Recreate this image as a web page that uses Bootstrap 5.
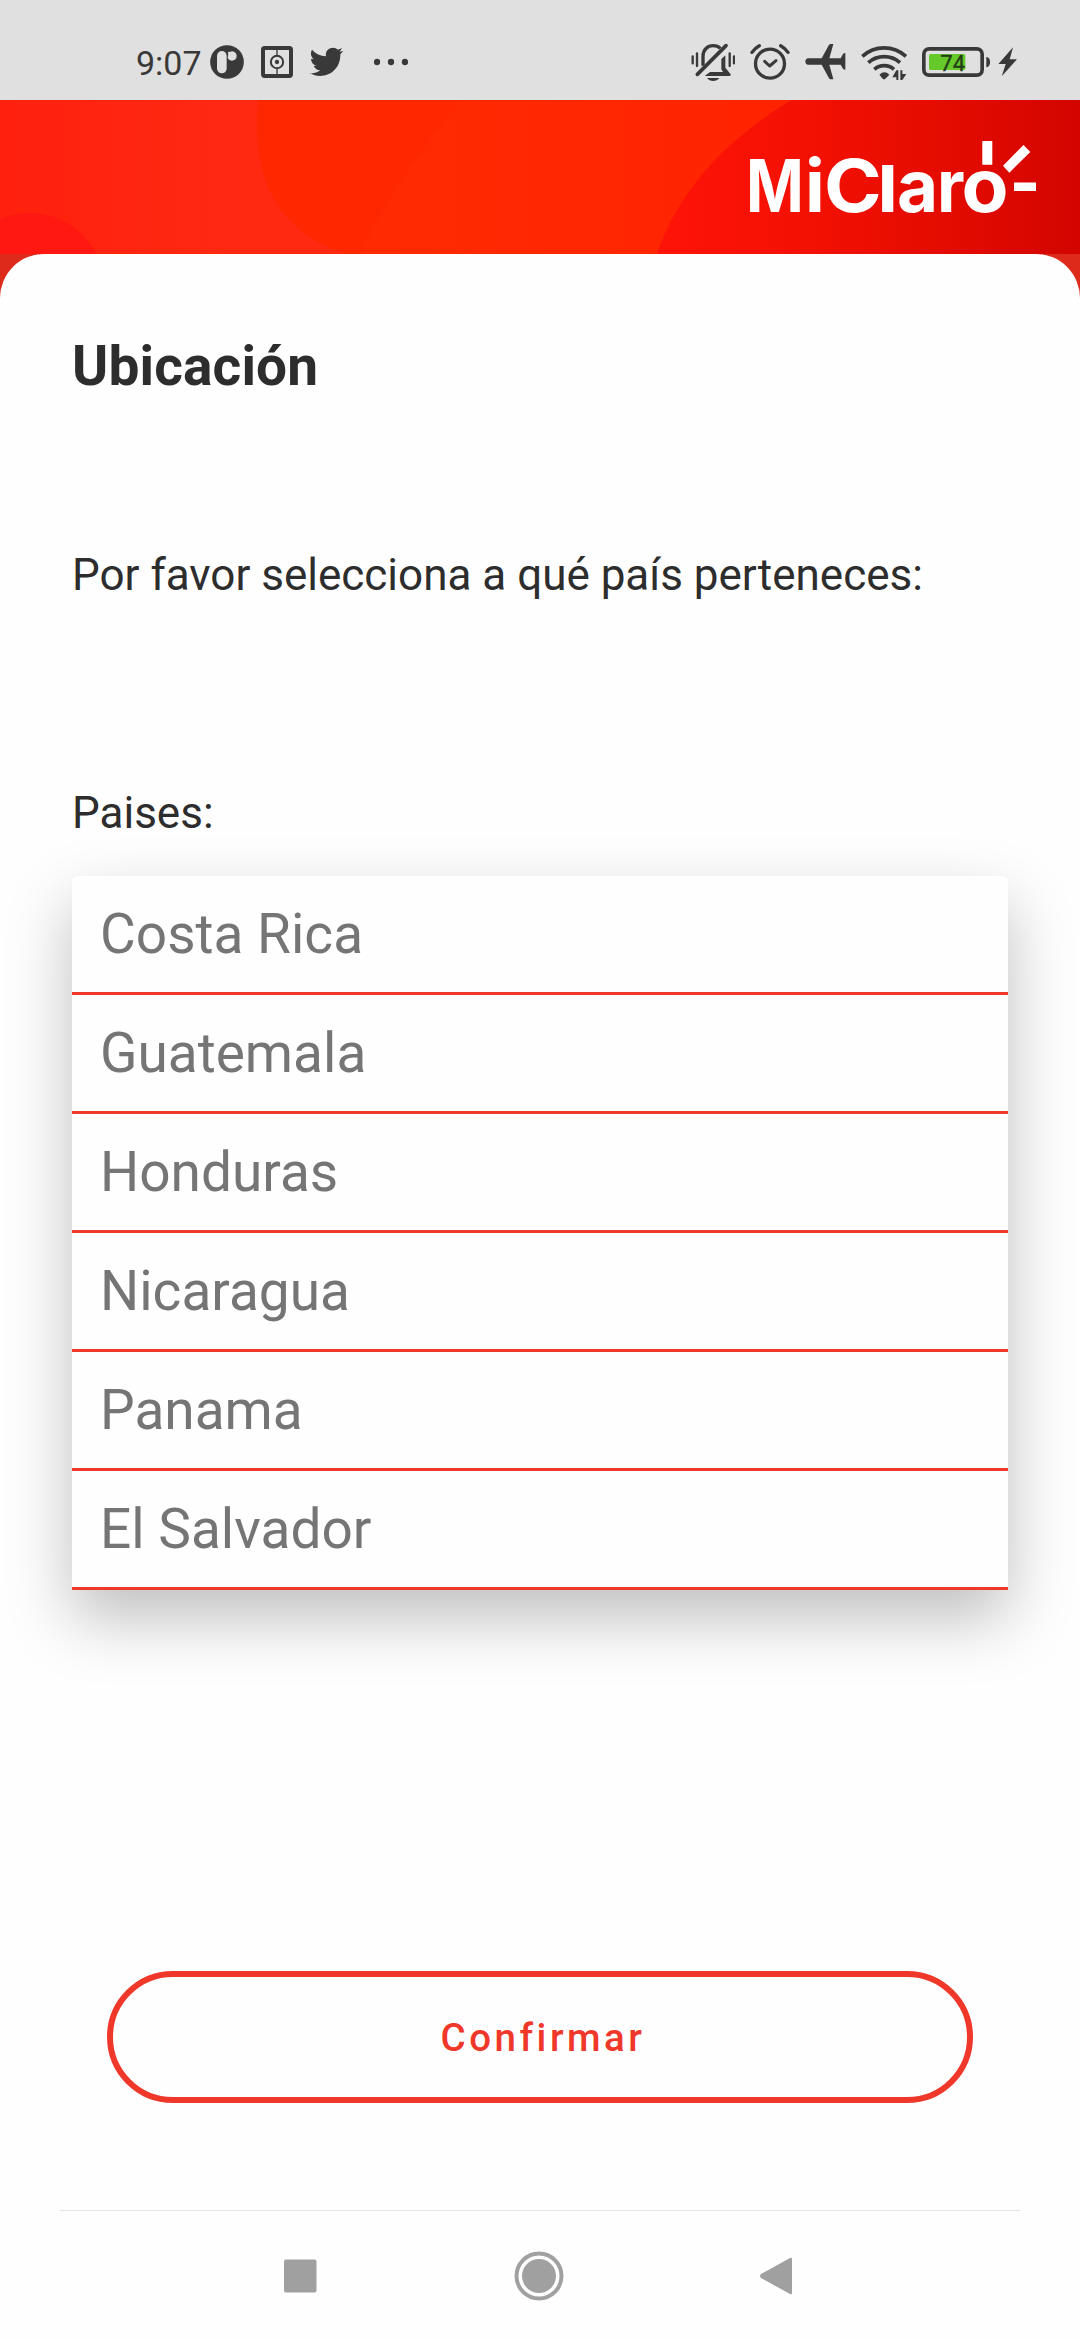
<!DOCTYPE html>
<html lang="es">
<head>
<meta charset="utf-8">
<meta name="viewport" content="width=device-width, initial-scale=1">
<title>Mi Claro</title>
<link href="https://cdn.jsdelivr.net/npm/bootstrap@5.3.0/dist/css/bootstrap.min.css" rel="stylesheet">
<style>
  :root { --claro: #f0382a; --ink: #2d2d2d; --icon: #393939; }
  body { font-family: Roboto, "Liberation Sans", sans-serif; background: #fefefe; color: var(--ink); height: 2340px; overflow: hidden; }
  svg { display: block; flex: none; }
  .status { height: 100px; background: #e0e0e0; padding: 42px 62.6px 0 136px; color: var(--icon); }
  .status svg { height: 40px; }
  .clock { width: 74px; font-size: 34px; line-height: 40px; padding-top: 1px; }
  .bell { margin-left: auto; }
  .sp-8 { margin-left: 8px; }
  .sp-14 { margin-left: 14.3px; }
  .sp-15 { margin-left: 15.3px; }
  .sp-17 { margin-left: 17.2px; }
  .sp-29 { margin-left: 29.4px; }
  .banner { height: 154px; }
  .sheet-wrap { background: #dd2a1b; }
  .sheet { background: #fefefe; border-radius: 44px 44px 0 0; height: 1956px; padding: 80px 72px 0; }
  .title { font-size: 55px; line-height: 64px; font-weight: 700; letter-spacing: .15px; }
  .copy { font-size: 44px; line-height: 52px; }
  .ask { margin-top: 151px; }
  .label { margin-top: 186px; }
  .countries { margin-top: 37px; border-radius: 6px 6px 0 0; box-shadow: 0 28px 64px rgba(0,0,0,.25); background: #fff; }
  .countries .list-group-item { height: 119px; border: 0; border-bottom: 3px solid var(--claro); padding: 26px 28px 0; font-size: 55px; line-height: 64px; color: #757575; background: #fefefe; border-radius: 0; }
  .countries .list-group-item:first-child { border-radius: 6px 6px 0 0; }
  .confirm { margin: 381px 35px 0; height: 132px; border: 6px solid var(--claro); color: var(--claro); font-size: 38.5px; font-weight: 500; letter-spacing: 3.5px; padding: 2px 0 0 6px; }
  .keys { height: 130px; margin: 0 60px; border-top: 1px solid #e4e4e4; padding: 0 227px 0 224px; color: #a0a0a0; }
</style>
</head>
<body class="d-flex flex-column">
<header class="status d-flex align-items-start">
  <span class="clock">9:07</span>
  <svg width="34" viewBox="270 66 102 120"><circle cx="321" cy="126" r="50.5" fill="#393939"/><rect x="291" y="93" width="29" height="67" rx="14.500" fill="#e0e0e0"/><path d="M324 96q2 10-1 17a14 14 0 1 0 8-18z" fill="#e0e0e0"/></svg>
  <svg class="sp-17" width="32" viewBox="423 66 96 120"><g fill="none" stroke="#393939"><rect x="429" y="84" width="84" height="84" rx="5" stroke-width="12"/><circle cx="471" cy="126" r="18.500" stroke-width="6"/><path d="M471 88v19M471 145v20" stroke-width="4"/></g><circle cx="471" cy="126" r="6.500" fill="#393939"/></svg>
  <svg class="sp-17" width="34" viewBox="572 66 102 120"><path fill="#393939" d="M578 89c11 12 25 19 42 20-3-14 7-26 21-26 6 0 11 2 15 6l12-5-7 11 11-2-9 10c1 38-26 65-61 65-11 0-21-3-30-8 12 1 22-2 31-9-10 0-17-6-20-14h9c-11-3-17-11-17-21l9 2c-9-7-12-18-6-29z"/></svg>
  <svg class="sp-29" width="34" viewBox="762 66 102 120" fill="#393939"><circle cx="771" cy="126" r="9.500"/><circle cx="813" cy="126" r="9.500"/><circle cx="855" cy="126" r="9.500"/></svg>

  <svg class="bell" width="44.700" viewBox="62 66 134 120" fill="none" stroke="#393939"><path d="M67 109v21M80 100v38M178 100v38M191 109v21" stroke-width="7" stroke-linecap="round"/><path d="M98 137v-28c0-20 14-32 30-32 10 0 17 3 22 8" stroke-width="10"/><path d="M81 163 167 77" stroke-width="11" stroke-linecap="round"/><path d="M103 168l16-12h39l-5-8v-31l12-11v37l16 20c1 3-1 5-4 5z" fill="#393939" stroke="none"/><path d="M110 174h37c-8 12-29 12-37 0z" fill="#393939" stroke="none"/></svg>
  <svg class="sp-14" width="40" viewBox="238 66 120 120" fill="none" stroke="#393939" stroke-linecap="round"><circle cx="298" cy="131" r="43.500" stroke-width="10"/><path d="M244 97q9-13 22-20M330 77q13 7 22 20" stroke-width="10"/><path d="M282 124l15 14 19-16" stroke-width="9" stroke-linejoin="round"/></svg>
  <svg class="sp-15" width="40.700" viewBox="404 66 122 120"><path fill="#393939" d="M414 115h40l22-41q2-2 5-2h8l-12 43h34l7-13q2-3 7-3v50q-5 0-7-3l-7-12h-34l12 44h-8q-3 0-5-3l-22-41h-40c-12 0-12-19 0-19z"/></svg>
  <svg class="sp-15" width="46.700" viewBox="572 66 140 120" fill="none" stroke="#393939" stroke-width="11"><path d="M576 109c37-34 93-34 131 0M594 128c27-24 68-24 95 0M612 148c17-15 42-15 59 0"/><path d="M627 164q15-14 30 0l-12 12q-4 3-8 0z" fill="#393939" stroke="none"/><g fill="#393939" stroke="none"><path d="M678 151h6v29h-6v-8h-12zM690 151h6v11h12l-12 18h-6z"/></g></svg>
  <svg class="sp-14" width="68" viewBox="756 66 204 120"><rect x="761.500" y="86.500" width="175" height="79" rx="16" fill="none" stroke="#393939" stroke-width="11"/><rect x="777" y="102" width="109" height="48" rx="5" fill="#65c92a"/><path d="M949 111c15 0 15 31 0 31z" fill="#393939"/><text x="811" y="152" font-size="66" font-family="Roboto, sans-serif" fill="#233d18" stroke="#233d18">74</text></svg>
  <svg class="sp-8" width="19.400" viewBox="984 66 58 120"><path fill="#393939" d="M1029 82l-44 50h22l-12 37 46-51h-22z"/></svg>
</header>

<svg class="banner" width="1080" height="154" viewBox="0 100 1080 154" role="img" aria-label="Mi Claro">
  <defs>
    <linearGradient id="base" x1="0" x2="258" y1="0" y2="0" gradientUnits="userSpaceOnUse"><stop stop-color="#ff210d"/><stop offset="1" stop-color="#ff2912"/></linearGradient>
    <linearGradient id="deep" x1="657" x2="1080" y1="0" y2="0" gradientUnits="userSpaceOnUse"><stop stop-color="#ff1308"/><stop offset=".35" stop-color="#f31103"/><stop offset=".7" stop-color="#e30b00"/><stop offset="1" stop-color="#d20500"/></linearGradient>
    <linearGradient id="warm" x1="361" x2="760" y1="0" y2="0" gradientUnits="userSpaceOnUse"><stop stop-color="#ff2a02"/><stop offset="1" stop-color="#ff2400"/></linearGradient>
  </defs>
  <path fill="url(#base)" d="M0 100h1080v154H0z"/>
  <path fill="#ff2700" d="M258 100C252 170 270 229 346 254H760L900 100z"/>
  <path fill="url(#warm)" d="M462 100Q388 190 361 254H760L900 100z"/>
  <circle cx="30" cy="287" r="74" fill="#ff1712"/>
  <path fill="url(#deep)" d="M791 100Q687 164 657 254H1080V100z"/>
  <g font-family="Inter, sans-serif" font-weight="700" font-size="73" fill="#fff">
    <text transform="translate(745.9 212) scale(.85 1)">M</text>
    <text x="805" y="212">i</text>
    <text transform="translate(824 212) scale(1.070 1)">C</text>
    <text x="878.600" y="212" font-size="65" font-weight="800">l</text>
    <text transform="translate(897 212) scale(.97 1)">a</text>
    <text transform="translate(937 212) scale(.93 1)">r</text>
    <text transform="translate(961.500 212) scale(1.050 1.020)">o</text>
    <path d="M982.300 141h10v23.700h-10zM1023.500 145l6.800 7-21 20.700-6.300-7zM1014 182.500h22v8.500h-22z"/>
  </g>
</svg>

<main class="sheet-wrap">
  <section class="sheet">
    <h1 class="title mb-0">Ubicación</h1>
    <p class="copy ask mb-0">Por favor selecciona a qué país perteneces:</p>
    <p class="copy label mb-0">Paises:</p>
    <ul class="list-group countries">
      <li class="list-group-item">Costa Rica</li>
      <li class="list-group-item">Guatemala</li>
      <li class="list-group-item">Honduras</li>
      <li class="list-group-item">Nicaragua</li>
      <li class="list-group-item">Panama</li>
      <li class="list-group-item">El Salvador</li>
    </ul>
    <div class="d-grid"><button type="button" class="btn rounded-pill confirm">Confirmar</button></div>
  </section>
</main>

<nav class="keys d-flex align-items-center justify-content-between" aria-label="Sistema">
  <svg width="33" height="50" viewBox="0 0 33 50" fill="currentColor"><rect y="8.500" width="32.500" height="33" rx="2"/></svg>
  <svg width="50" height="50" viewBox="0 0 50 50" fill="currentColor"><circle cx="25" cy="25" r="22.500" fill="none" stroke="currentColor" stroke-width="4"/><circle cx="25" cy="25" r="17"/></svg>
  <svg width="33" height="50" viewBox="0 0 33 50" fill="currentColor"><path d="M30 7q2-1 2 1v34q0 2-2 1L1 27q-2-2 0-4z"/></svg>
</nav>
<script src="https://cdn.jsdelivr.net/npm/bootstrap@5.3.0/dist/js/bootstrap.bundle.min.js"></script>
</body>
</html>
